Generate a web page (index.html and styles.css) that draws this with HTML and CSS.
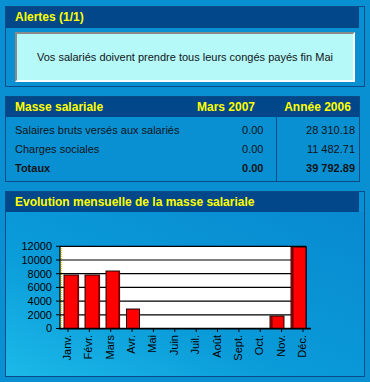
FILE: index.html
```html
<!DOCTYPE html>
<html lang="fr">
<head>
<meta charset="utf-8">
<title>Tableau de bord</title>
<link rel="stylesheet" href="styles.css">
</head>
<body>
<main class="dashboard">
  <section class="panel panel-wide panel-alert">
    <h2 class="panel-title panel-title-short">Alertes (1/1)</h2>
    <div class="alert-body">
      <div class="alert-box">Vos salariés doivent prendre tous leurs congés payés fin Mai</div>
    </div>
  </section>

  <section class="panel panel-narrow">
    <table class="payroll">
      <colgroup>
        <col class="c-label">
        <col class="c-month">
        <col class="c-year">
      </colgroup>
      <thead>
        <tr>
          <th class="col-label">Masse salariale</th>
          <th class="col-month">Mars 2007</th>
          <th class="col-year">Année 2006</th>
        </tr>
      </thead>
      <tbody>
        <tr class="row-first">
          <td class="col-label">Salaires bruts versés aux salariés</td>
          <td class="col-month num">0.00</td>
          <td class="col-year num">28 310.18</td>
        </tr>
        <tr>
          <td class="col-label">Charges sociales</td>
          <td class="col-month num">0.00</td>
          <td class="col-year num">11 482.71</td>
        </tr>
        <tr class="row-last row-total">
          <td class="col-label">Totaux</td>
          <td class="col-month num">0.00</td>
          <td class="col-year num">39 792.89</td>
        </tr>
      </tbody>
    </table>
  </section>

  <section class="panel panel-wide panel-chart">
    <h2 class="panel-title panel-title-short panel-title-chart">Evolution mensuelle de la masse salariale</h2>
    <div class="chart-body">
      <svg class="chart" viewBox="6 212 358 164" width="358" height="164" xmlns="http://www.w3.org/2000/svg">
        <!-- left wall -->
        <rect x="60" y="246" width="3" height="82.5" fill="#fffbe0"/>
        <line x1="61.6" y1="246" x2="61.6" y2="328.5" stroke="#e6d200" stroke-width="1" stroke-dasharray="1 1"/>
        <!-- back wall -->
        <rect x="63" y="246" width="243" height="82.5" fill="#ffffff"/>
        <g stroke="#000" stroke-width="1.2">
          <line x1="60" y1="246.3" x2="306" y2="246.3"/>
          <line x1="60" y1="260" x2="306" y2="260"/>
          <line x1="60" y1="273.7" x2="306" y2="273.7"/>
          <line x1="60" y1="287.4" x2="306" y2="287.4"/>
          <line x1="60" y1="301.1" x2="306" y2="301.1"/>
          <line x1="60" y1="314.8" x2="306" y2="314.8"/>
          <line x1="60" y1="246" x2="60" y2="329"/>
          <line x1="306" y1="246" x2="306" y2="329"/>
        </g>
        <!-- y ticks -->
        <g stroke="#000" stroke-width="1">
          <line x1="56" y1="246.3" x2="60" y2="246.3"/>
          <line x1="56" y1="260" x2="60" y2="260"/>
          <line x1="56" y1="273.7" x2="60" y2="273.7"/>
          <line x1="56" y1="287.4" x2="60" y2="287.4"/>
          <line x1="56" y1="301.1" x2="60" y2="301.1"/>
          <line x1="56" y1="314.8" x2="60" y2="314.8"/>
          <line x1="56" y1="328.5" x2="60" y2="328.5"/>
        </g>
        <g class="axis-text" text-anchor="end">
          <text x="52" y="250">12000</text>
          <text x="52" y="263.8">10000</text>
          <text x="52" y="277.5">8000</text>
          <text x="52" y="291.2">6000</text>
          <text x="52" y="304.9">4000</text>
          <text x="52" y="318.6">2000</text>
          <text x="52" y="332.3">0</text>
        </g>
        <!-- bars -->
        <g stroke="#000" stroke-width="0.9">
          <rect x="64" y="275" width="14.5" height="53.5" fill="#ff0000"/>
          <rect x="85" y="275" width="14.5" height="53.5" fill="#ff0000"/>
          <rect x="106" y="271" width="13.5" height="57.5" fill="#ff0000"/>
          <rect x="126.5" y="309" width="13" height="19.5" fill="#ff0000"/>
          <rect x="270" y="316" width="14" height="12.5" fill="#ff0000"/>
          <rect x="291" y="247" width="15" height="81.5" fill="#ff0000"/>
        </g>
        <g fill="#7a0000">
          <rect x="77.3" y="275.5" width="1.8" height="52.5"/>
          <rect x="98.3" y="275.5" width="1.8" height="52.5"/>
          <rect x="118.3" y="271.5" width="1.8" height="56.5"/>
          <rect x="271" y="316.5" width="1.6" height="11.5"/>
          <rect x="292" y="247.5" width="1.6" height="80.5"/>
        </g>
        <!-- x axis -->
        <line x1="59" y1="328.6" x2="311" y2="328.6" stroke="#000" stroke-width="1.6"/>
        <g stroke="#000" stroke-width="1">
          <line x1="68" y1="329" x2="68" y2="332"/>
          <line x1="89.4" y1="329" x2="89.4" y2="332"/>
          <line x1="110.7" y1="329" x2="110.7" y2="332"/>
          <line x1="132.1" y1="329" x2="132.1" y2="332"/>
          <line x1="153.4" y1="329" x2="153.4" y2="332"/>
          <line x1="174.8" y1="329" x2="174.8" y2="332"/>
          <line x1="196.2" y1="329" x2="196.2" y2="332"/>
          <line x1="217.5" y1="329" x2="217.5" y2="332"/>
          <line x1="238.9" y1="329" x2="238.9" y2="332"/>
          <line x1="260.2" y1="329" x2="260.2" y2="332"/>
          <line x1="281.6" y1="329" x2="281.6" y2="332"/>
          <line x1="303" y1="329" x2="303" y2="332"/>
        </g>
        <g class="axis-text" text-anchor="end">
          <text transform="translate(71,335) rotate(-90)">Janv.</text>
          <text transform="translate(92.4,335) rotate(-90)">Févr.</text>
          <text transform="translate(113.7,335) rotate(-90)">Mars</text>
          <text transform="translate(135.1,335) rotate(-90)">Avr.</text>
          <text transform="translate(156.4,335) rotate(-90)">Mai</text>
          <text transform="translate(177.8,335) rotate(-90)">Juin</text>
          <text transform="translate(199.2,335) rotate(-90)">Juil.</text>
          <text transform="translate(220.5,335) rotate(-90)">Août</text>
          <text transform="translate(241.9,335) rotate(-90)">Sept.</text>
          <text transform="translate(263.2,335) rotate(-90)">Oct.</text>
          <text transform="translate(284.6,335) rotate(-90)">Nov.</text>
          <text transform="translate(306,335) rotate(-90)">Déc.</text>
        </g>
      </svg>
    </div>
  </section>
</main>
</body>
</html>
```

FILE: styles.css
```css
html, body {
  margin: 0;
}

body {
  padding: 6px 0 0 5px;
  background: #0890d2;
  font-family: "Liberation Sans", Arial, sans-serif;
  color: #101418;
  width: 370px;
  height: 382px;
  box-sizing: border-box;
  overflow: hidden;
}

.dashboard {
  display: flex;
  flex-direction: column;
  gap: 9px;
  width: 360px;
}

.panel {
  border: 1px solid #0b4c86;
  box-sizing: border-box;
}

.panel-wide {
  width: 360px;
}

.panel-narrow {
  width: 355px;
}

.panel-title {
  margin: 0;
  height: 21px;
  line-height: 21px;
  padding-left: 9px;
  background: #02478a;
  color: #ffff00;
  font-size: 12px;
  font-weight: bold;
}

.panel-title-short {
  margin-right: 5px;
}

.panel-title-chart {
  height: 20px;
  line-height: 20px;
}

.alert-body {
  padding: 4px 9px;
}

.alert-box {
  height: 50px;
  box-sizing: border-box;
  border-style: solid;
  border-width: 2px;
  border-color: #8a8a8a #ffffff #ffffff #8a8a8a;
  background: #b6f9f9;
  display: flex;
  align-items: center;
  justify-content: center;
  font-size: 11px;
  color: #101418;
}

.payroll {
  width: 353px;
  table-layout: fixed;
  border-collapse: collapse;
  font-size: 11px;
}

.c-label {
  width: 170px;
}

.c-month {
  width: 100px;
}

.c-year {
  width: 83px;
}

.payroll th {
  height: 20px;
  padding: 0;
  background: #02478a;
  color: #ffff00;
  font-size: 12px;
  font-weight: bold;
  text-align: center;
  white-space: nowrap;
}

.payroll th.col-label {
  text-align: left;
  padding-left: 9px;
}

.payroll td {
  padding: 0;
  line-height: 19px;
  height: 19px;
  white-space: nowrap;
}

.payroll td.col-label {
  padding-left: 9px;
  overflow: visible;
}

.payroll td.col-month {
  padding-right: 12px;
}

.payroll td.col-year {
  border-left: 1px solid #0b4c86;
  padding-right: 4px;
}

.payroll .num {
  text-align: right;
}

.payroll .row-first td {
  padding-top: 4px;
}

.payroll .row-last td {
  padding-bottom: 3px;
}

.payroll .row-total td {
  font-weight: bold;
}

.chart-body {
  height: 164px;
  background: linear-gradient(to top right, #1cb9e8 0%, #0a9bd9 40%, #0889d0 100%);
}

.chart {
  display: block;
}

.axis-text {
  font-family: "Liberation Sans", Arial, sans-serif;
  font-size: 11px;
  fill: #000;
}
```
